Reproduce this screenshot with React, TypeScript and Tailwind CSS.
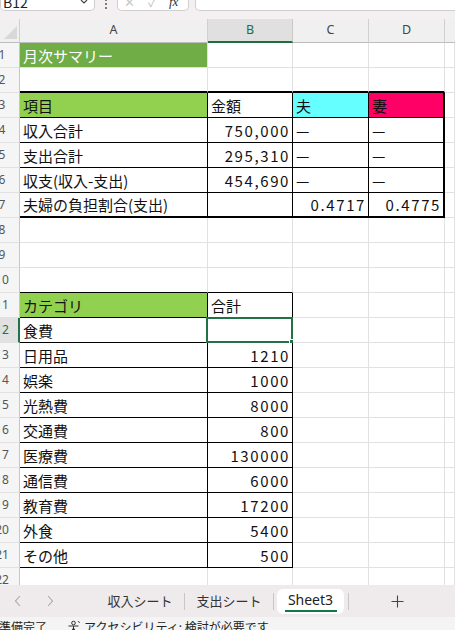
import React from 'react';

type Col = 'A' | 'B' | 'C' | 'D';
type CellSpec = { t?: string; r?: boolean; bg?: string; white?: boolean };

const data: Record<number, Partial<Record<Col, CellSpec>>> = {
  1: { A: { t: '月次サマリー', bg: 'bg-[#70ad47]', white: true } },
  3: {
    A: { t: '項目', bg: 'bg-[#92d050]' },
    B: { t: '金額' },
    C: { t: '夫', bg: 'bg-[#66ffff]' },
    D: { t: '妻', bg: 'bg-[#ff0066]' },
  },
  4: { A: { t: '収入合計' }, B: { t: '750,000', r: true }, C: { t: '—' }, D: { t: '—' } },
  5: { A: { t: '支出合計' }, B: { t: '295,310', r: true }, C: { t: '—' }, D: { t: '—' } },
  6: { A: { t: '収支(収入-支出)' }, B: { t: '454,690', r: true }, C: { t: '—' }, D: { t: '—' } },
  7: { A: { t: '夫婦の負担割合(支出)' }, C: { t: '0.4717', r: true }, D: { t: '0.4775', r: true } },
  11: { A: { t: 'カテゴリ', bg: 'bg-[#92d050]' }, B: { t: '合計' } },
  12: { A: { t: '食費' } },
  13: { A: { t: '日用品' }, B: { t: '1210', r: true } },
  14: { A: { t: '娯楽' }, B: { t: '1000', r: true } },
  15: { A: { t: '光熱費' }, B: { t: '8000', r: true } },
  16: { A: { t: '交通費' }, B: { t: '800', r: true } },
  17: { A: { t: '医療費' }, B: { t: '130000', r: true } },
  18: { A: { t: '通信費' }, B: { t: '6000', r: true } },
  19: { A: { t: '教育費' }, B: { t: '17200', r: true } },
  20: { A: { t: '外食' }, B: { t: '5400', r: true } },
  21: { A: { t: 'その他' }, B: { t: '500', r: true } },
};

const widthCls: Record<Col, string> = {
  A: 'w-[188px]',
  B: 'w-[85px]',
  C: 'w-[76px]',
  D: 'w-[76px]',
};

function borders(row: number, col: Col | 'E'): string {
  const isABCD = col !== 'E';
  const inT1 = row >= 3 && row <= 7 && isABCD;
  const inT2 = row >= 11 && row <= 21 && (col === 'A' || col === 'B');
  let right = 'border-r border-r-[#e1e1e1]';
  let bottom = 'border-b border-b-[#e1e1e1]';
  if (inT1) {
    right = col === 'D' ? 'border-r-2 border-r-black' : 'border-r border-r-black';
    bottom = row === 7 ? 'border-b-2 border-b-black' : 'border-b border-b-black';
  }
  if (row === 2 && isABCD) bottom = 'border-b-2 border-b-black';
  if (inT2) {
    right = 'border-r border-r-black';
    bottom = 'border-b border-b-black';
  }
  if (row === 10 && (col === 'A' || col === 'B')) bottom = 'border-b border-b-black';
  return right + ' ' + bottom;
}

function Cell({ row, col }: { row: number; col: Col }) {
  const spec = data[row]?.[col];
  const selected = row === 12 && col === 'B';
  const isNum = spec?.r;
  return (
    <div
      className={`relative h-[25px] shrink-0 flex items-center pt-[1px] ${widthCls[col]} ${borders(row, col)} ${
        spec?.bg ?? 'bg-white'
      } ${isNum ? 'justify-end pr-[2px]' : 'justify-start pl-[3px]'}`}
    >
      {spec?.t && (
        <span
          className={`whitespace-nowrap text-[15px] leading-[20px] ${spec.white ? 'text-white' : 'text-[#111]'} ${
            isNum ? 'tracking-[1.6px]' : ''
          }`}
        >
          {spec.t}
        </span>
      )}
      {selected && (
        <div className="absolute -left-[2px] -top-[1px] -right-[1px] -bottom-[1px] border-2 border-[#217346] pointer-events-none">
          <div className="absolute -right-[5px] -bottom-[5px] w-[7px] h-[7px] bg-[#217346] border border-white" />
        </div>
      )}
    </div>
  );
}

function Row({ row }: { row: number }) {
  const sel = row === 12;
  return (
    <div className="flex">
      <div
        className={`w-[20px] h-[25px] shrink-0 overflow-hidden border-b border-b-[#e1e1e1] flex items-center ${
          sel ? 'bg-[#e1e1e1] border-r-2 border-r-[#217346]' : 'bg-[#f5f5f5] border-r border-r-[#c6c6c6]'
        }`}
      >
        <div
          className={`w-[40px] -ml-[18px] shrink-0 text-center text-[12px] font-[family-name:'Noto_Sans',sans-serif] ${
            sel ? 'text-[#217346]' : 'text-[#555]'
          }`}
        >
          {row}
        </div>
      </div>
      {(['A', 'B', 'C', 'D'] as Col[]).map((c) => (
        <Cell key={c} row={row} col={c} />
      ))}
      <div className={`h-[25px] flex-1 bg-white ${borders(row, 'E')}`} />
    </div>
  );
}

function ColHeader() {
  const base = 'h-[24px] shrink-0 flex items-center justify-center text-[12.5px] font-[family-name:"Noto_Sans",sans-serif]';
  return (
    <div className="flex h-[24px] bg-[#f0f0f0]">
      <div className="w-[20px] h-[24px] shrink-0 border-r border-r-[#d0d0d0] border-b border-b-[#bdbdbd] relative flex items-end justify-end pb-[3px] pr-[2px]">
        <svg width="13" height="13" viewBox="0 0 13 13">
          <polygon points="13,0 13,13 0,13" fill="#d8d8d8" />
        </svg>
      </div>
      <div className={`${base} w-[188px] border-r border-r-[#d0d0d0] border-b border-b-[#bdbdbd] text-[#444]`}>A</div>
      <div className={`${base} w-[85px] bg-[#e0e0e0] border-r border-r-[#c8c8c8] border-b-2 border-b-[#1e6e42] text-[#1e6e42]`}>
        B
      </div>
      <div className={`${base} w-[76px] border-r border-r-[#d0d0d0] border-b border-b-[#bdbdbd] text-[#444]`}>C</div>
      <div className={`${base} w-[76px] border-r border-r-[#d0d0d0] border-b border-b-[#bdbdbd] text-[#444]`}>D</div>
      <div className={`${base} flex-1 border-b border-b-[#bdbdbd]`} />
    </div>
  );
}

function TopBar() {
  return (
    <div className="h-[19px] bg-[#f4eff1] overflow-hidden flex items-start">
      <div className="w-[95px] h-[11px] shrink-0 bg-white border border-t-0 border-[#cfcfcf] rounded-b-[5px] overflow-hidden flex items-start justify-between pl-[2px] pr-[6px]">
        <span className="text-[14px] leading-[14px] -mt-[5px] text-[#222]">B12</span>
        <svg width="8" height="6" viewBox="0 0 8 6" className="mt-[0px]">
          <path d="M1 0 L4 3 L7 0" stroke="#444" strokeWidth="1.2" fill="none" />
        </svg>
      </div>
      <div className="w-[22px] shrink-0 flex justify-center">
        <div className="flex flex-col gap-[2px] mt-[-1px]">
          <div className="w-[2px] h-[2px] bg-[#555] rounded-full" />
          <div className="w-[2px] h-[2px] bg-[#555] rounded-full" />
          <div className="w-[2px] h-[2px] bg-[#555] rounded-full" />
        </div>
      </div>
      <div className="w-[72px] h-[11px] shrink-0 bg-white border border-t-0 border-[#cfcfcf] rounded-b-[5px] overflow-hidden flex items-start pl-[6px]">
        <span className="text-[13px] leading-[13px] -mt-[5px] text-[#c8c8c8]">✕</span>
        <span className="text-[13px] leading-[13px] -mt-[5px] text-[#c8c8c8] ml-[13px]">✓</span>
        <span className="text-[13px] leading-[13px] -mt-[5px] text-[#333] italic ml-[12px] font-[family-name:'Liberation_Serif',serif]">
          fx
        </span>
      </div>
      <div className="ml-[6px] flex-1 h-[11px] bg-white border border-t-0 border-r-0 border-[#cfcfcf] rounded-bl-[5px]" />
    </div>
  );
}

function TabBar() {
  return (
    <div className="h-[32px] bg-[#efeaec] flex items-center text-[13px] text-[#333] font-[family-name:'Noto_Sans_CJK_JP',sans-serif]">
      <div className="w-[36px] flex justify-center">
        <svg width="8" height="12" viewBox="0 0 8 12">
          <path d="M6 1 L1.5 6 L6 11" stroke="#a8a8a8" strokeWidth="1.1" fill="none" />
        </svg>
      </div>
      <div className="w-[28px] flex justify-center">
        <svg width="8" height="12" viewBox="0 0 8 12">
          <path d="M2 1 L6.5 6 L2 11" stroke="#a8a8a8" strokeWidth="1.1" fill="none" />
        </svg>
      </div>
      <div className="w-[32px]" />
      <div className="w-[88px] flex justify-center">収入シート</div>
      <div className="w-[1px] h-[17px] bg-[#c9c4c6]" />
      <div className="w-[88px] flex justify-center">支出シート</div>
      <div className="w-[1px] h-[17px] bg-[#c9c4c6]" />
      <div className="ml-[3px] w-[67px] h-[25px] bg-white rounded-[6px] flex flex-col items-center justify-center">
        <span className="text-[14px] leading-[16px] mt-[1px] font-[family-name:'Noto_Sans',sans-serif] text-[#222]">Sheet3</span>
        <div className="w-[52px] h-[2px] bg-[#137a3f] mt-[2px]" />
      </div>
      <div className="ml-[4px] w-[1px] h-[17px] bg-[#c9c4c6]" />
      <div className="w-[96px] flex justify-center">
        <svg width="13" height="13" viewBox="0 0 13 13">
          <path d="M6.5 0.5 V12.5 M0.5 6.5 H12.5" stroke="#444" strokeWidth="1.1" />
        </svg>
      </div>
    </div>
  );
}

function StatusBar() {
  return (
    <div className="h-[13px] bg-[#f4f4f4] overflow-hidden flex items-start text-[12px] leading-[16px] text-[#222] font-[family-name:'Noto_Sans_CJK_JP',sans-serif]">
      <span className="-ml-[1px] mt-[2px]">準備完了</span>
      <svg width="13" height="13" viewBox="0 0 13 13" className="ml-[20px] mt-[3px]">
        <circle cx="6.5" cy="3" r="1.8" fill="none" stroke="#333" strokeWidth="1" />
        <path d="M1.5 6 H11.5 M6.5 6 V12 M4 12 L6.5 8 L9 12" stroke="#333" strokeWidth="1" fill="none" />
        <path d="M11 1 L11.8 2.2 L13 2.5" stroke="#333" strokeWidth="0.8" fill="none" />
      </svg>
      <span className="ml-[4px] mt-[2px]">アクセシビリティ: 検討が必要です</span>
    </div>
  );
}

export default function App() {
  const rows = Array.from({ length: 22 }, (_, i) => i + 1);
  return (
    <div className="w-[455px] h-[630px] overflow-hidden bg-white flex flex-col font-[family-name:'Noto_Sans_CJK_JP',sans-serif]">
      <TopBar />
      <ColHeader />
      <div className="h-[542px] overflow-hidden shrink-0">
        {rows.map((r) => (
          <Row key={r} row={r} />
        ))}
      </div>
      <TabBar />
      <StatusBar />
    </div>
  );
}
